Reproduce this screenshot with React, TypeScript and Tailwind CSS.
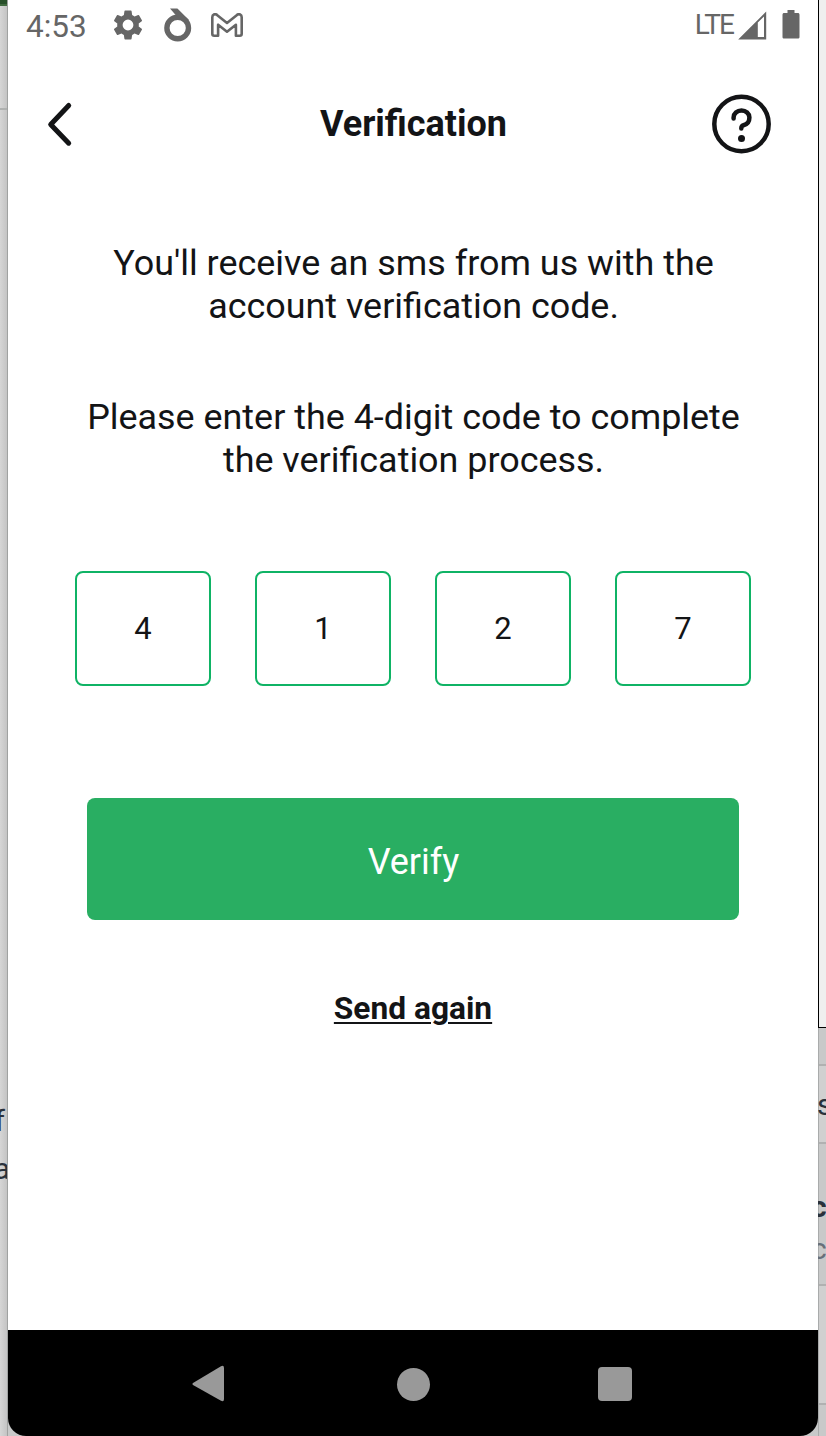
import React from "react";

const digits = ["4", "1", "2", "7"];

function StatusBar() {
  return (
    <div className="flex h-[50px] items-center pl-[18px] pr-[18px] text-[#666666]">
      <span className="w-[87px] pt-[3px] text-[31.5px] leading-[48px]">4:53</span>
      <svg className="-ml-[3px] -mt-px shrink-0" width="36" height="36" viewBox="0 0 24 24" fill="currentColor">
        <path d="M19.14 12.94c.04-.3.06-.61.06-.94 0-.32-.02-.64-.07-.94l2.03-1.58a.49.49 0 0 0 .12-.61l-1.92-3.32a.49.49 0 0 0-.59-.22l-2.39.96c-.5-.38-1.03-.7-1.62-.94l-.36-2.54a.48.48 0 0 0-.48-.41h-3.84c-.24 0-.43.17-.47.41l-.36 2.54c-.59.24-1.13.57-1.62.94l-2.39-.96a.49.49 0 0 0-.59.22L2.74 8.87c-.12.21-.08.47.12.61l2.03 1.58c-.05.3-.09.63-.09.94s.02.64.07.94l-2.03 1.58a.49.49 0 0 0-.12.61l1.92 3.32c.12.22.37.29.59.22l2.39-.96c.5.38 1.03.7 1.62.94l.36 2.54c.05.24.24.41.48.41h3.84c.24 0 .44-.17.47-.41l.36-2.54c.59-.24 1.13-.56 1.62-.94l2.39.96c.22.08.47 0 .59-.22l1.92-3.32a.49.49 0 0 0-.12-.61zM12 15.6A3.6 3.6 0 1 1 12 8.4a3.6 3.6 0 0 1 0 7.2z" />
      </svg>
      <svg className="ml-[18px] shrink-0" width="28" height="34" viewBox="0 0 28 34">
        <circle cx="13.7" cy="20" r="10.8" fill="none" stroke="currentColor" strokeWidth="5.4" />
        <path d="M6 0.4h7.4L25 12l-4 3-8.500-7z" fill="currentColor" />
      </svg>
      <svg className="-mt-px ml-[19px] shrink-0" width="32" height="24" viewBox="0 0 32 24" fill="none" stroke="currentColor" strokeWidth="2.6" strokeLinejoin="round">
        <path d="M1.3 4.3C1.3 1.4 4 .4 6 1.9L16 9.9 26 1.9c2-1.500 4.700-.500 4.700 2.400V20.800c0 1.200-.700 1.900-1.900 1.900H24.900V11.700L16 18.700 7.100 11.700V22.700H3.200c-1.200 0-1.900-.700-1.900-1.900z" />
      </svg>
      <span className="ml-auto text-[28px] leading-[50px] tracking-[-1.9px]">LTE</span>
      <svg className="ml-[5px] shrink-0" width="29" height="29" viewBox="0 0 29 29" fill="currentColor">
        <path fillRule="evenodd" d="M28.2 0.5V28.5H0.200zM19.800 11.500V26H26V5.600z" />
      </svg>
      <svg className="-mt-px ml-[15px] shrink-0" width="18" height="29" viewBox="0 0 18 29" fill="currentColor">
        <path d="M5.5 0h7v3h3.3c1 0 1.7.7 1.7 1.7v22.2c0 1-.7 1.7-1.7 1.7H2.2c-1 0-1.7-.7-1.7-1.7V4.700c0-1 .7-1.7 1.7-1.700h3.300z" />
      </svg>
    </div>
  );
}

function Header() {
  return (
    <header className="grid h-[148px] grid-cols-[80px_1fr_80px] items-center px-[36px]">
      <button aria-label="Back">
        <svg width="32" height="48" viewBox="0 0 32 48" fill="none" stroke="#131416" strokeWidth="5" strokeLinecap="round" strokeLinejoin="round">
          <path d="M24.700 5.500 6.700 24.500 24.700 43.200" />
        </svg>
      </button>
      <h1 className="pl-[1px] text-center text-[36px] font-bold leading-[42px]">Verification</h1>
      <button aria-label="Help" className="mr-[8px] justify-self-end">
        <svg width="62" height="60" viewBox="0 0 62 60" fill="none" stroke="#131416">
          <circle cx="29.500" cy="30" r="27.200" strokeWidth="4.500" />
          <path d="M21.600 24.500V23.500A7.900 7 0 0 1 37.400 23.500C37.400 28 34.500 30.500 31.500 31.200Q29.300 31.800 29.300 34.600" strokeWidth="4.500" strokeLinecap="round" />
          <circle cx="29.500" cy="44.500" r="3.500" fill="#131416" stroke="none" />
        </svg>
      </button>
    </header>
  );
}

function NavBar() {
  return (
    <nav className="mt-auto flex h-[106px] items-center rounded-b-[18px] bg-black pl-[183px] text-[#999999]">
      <svg width="34" height="38" viewBox="0 0 34 38" fill="currentColor" className="mt-[2px]">
        <path d="M2 18 30 1.200Q33 0 33 3V34Q33 37.200 30 35.800L2 20Q.600 19 2 18" />
      </svg>
      <span className="ml-[171.500px] mt-[2px] size-[33px] rounded-full bg-[#999999]" />
      <span className="ml-[168.500px] mt-[2px] size-[34px] rounded-[4px] bg-[#999999]" />
    </nav>
  );
}

function LeftEdge() {
  return (
    <div className="flex h-full w-[8px] flex-col overflow-hidden border-r border-[#a0a2a1] bg-linear-to-r from-[#d6d6d6] to-[#c4c4c4] text-[30px] leading-[48px] text-[#29313b]">
      <div className="h-[6px] shrink-0 border-b-2 border-[#416b40] bg-[#28502a]" />
      <div className="h-[104px] shrink-0 border-b-2 border-[#afb1b0]" />
      <div className="mt-[987px] flex h-[48px] shrink-0 justify-end pr-[2px]">f</div>
      <div className="-mr-[3px] flex h-[48px] shrink-0 justify-end">a</div>
    </div>
  );
}

function RightEdge() {
  return (
    <div className="flex h-full w-[8px] flex-col overflow-hidden bg-[#c8c9c9] text-[30px] text-[#29313b]">
      <div className="h-[1028px] shrink-0 border-b border-l border-black bg-[#efefef]" />
      <div className="flex flex-1 flex-col border-l border-[#a9abab]">
        <div className="h-[38px] shrink-0 border-b-2 border-[#b0b1b1]" />
        <div className="h-[78px] shrink-0 border-b-2 border-[#b0b1b1] bg-[#d0d0d0] leading-[78px]">
          <span className="-ml-[2px]">s</span>
        </div>
        <div className="h-[142px] shrink-0 border-b-2 border-[#b0b1b1] pt-[42px] leading-[42px]">
          <div className="-ml-[8px] font-bold">c</div>
          <div className="-ml-[8px] text-[#68707a]">c</div>
        </div>
        <div className="h-[119px] shrink-0 border-b-2 border-[#b0b1b1] bg-[#d0d0d0]" />
      </div>
    </div>
  );
}

export default function App() {
  return (
    <div className="flex h-[1436px] w-[826px] overflow-hidden bg-[#c8c9c9] font-['Roboto',sans-serif] text-[#131416]">
      <LeftEdge />
      <div className="flex h-full w-[810px] shrink-0 flex-col rounded-b-[18px] bg-white">
        <StatusBar />
        <Header />
        <main className="flex flex-col items-center">
          <p className="mt-[44px] whitespace-nowrap pl-[1px] text-center text-[35.900px] leading-[43px]">
            You'll receive an sms from us with the
            <br />
            account verification code.
          </p>
          <p className="mt-[68px] whitespace-nowrap pl-[1px] text-center text-[35.900px] leading-[43px]">
            Please enter the 4-digit code to complete
            <br />
            the verification process.
          </p>
          <div className="mt-[89px] flex gap-[44.700px]">
            {digits.map((digit) => (
              <div
                key={digit}
                className="flex h-[115px] w-[135.300px] items-center justify-center rounded-[8px] border-2 border-[#0fb365] pt-[2px] text-[31px]"
              >
                {digit}
              </div>
            ))}
          </div>
          <button className="mt-[112px] h-[122px] w-[652px] rounded-[8px] bg-[#29ae62] pl-[1px] pt-[5px] text-[36px] text-white">
            Verify
          </button>
          <a className="mt-[70px] text-[31.700px] font-bold leading-[38px] underline decoration-2 underline-offset-[3px]">
            Send again
          </a>
        </main>
        <NavBar />
      </div>
      <RightEdge />
    </div>
  );
}
